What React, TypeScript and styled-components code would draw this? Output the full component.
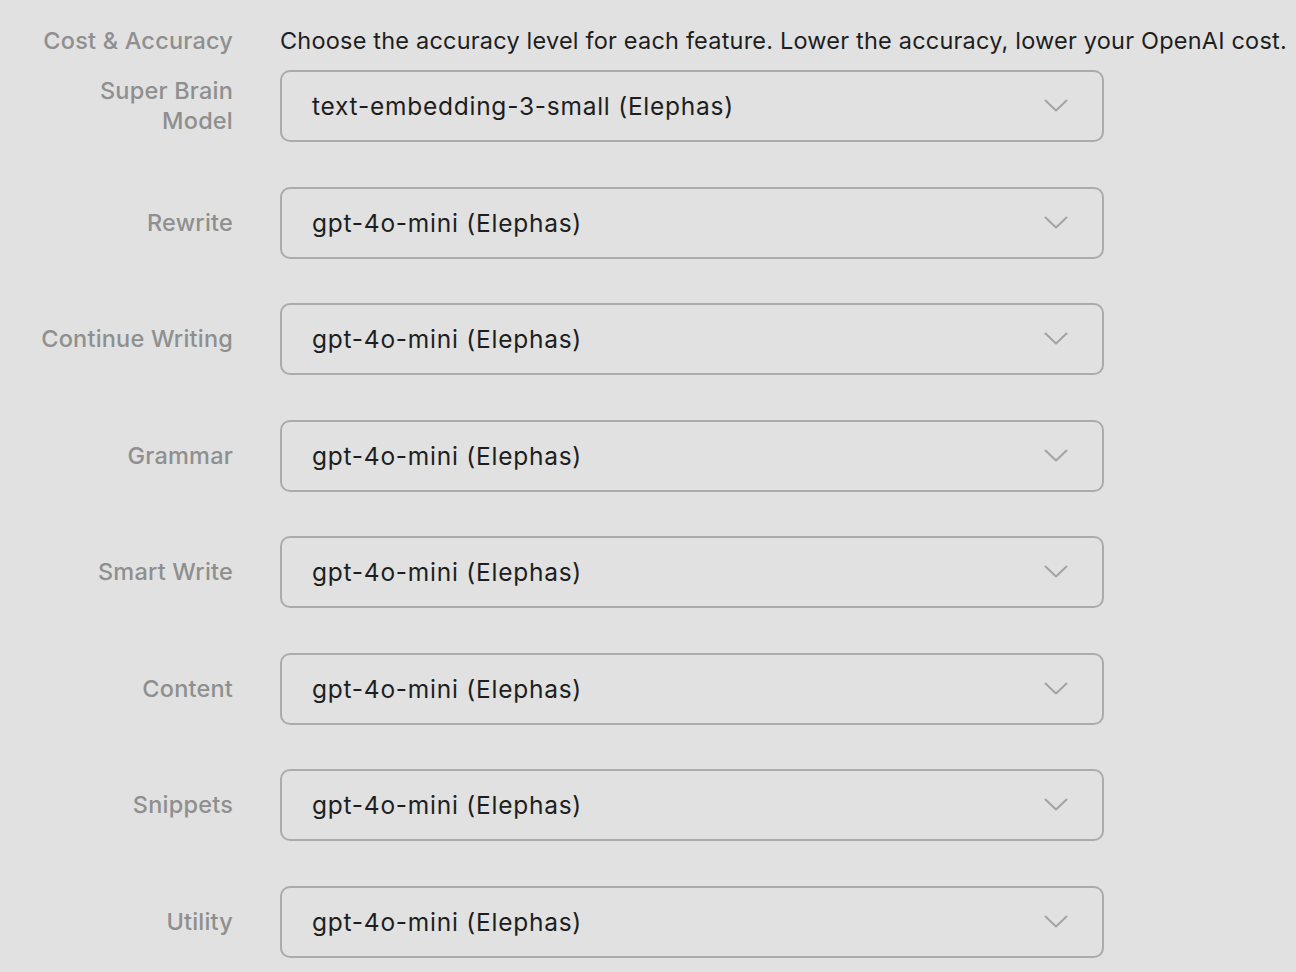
import styled, { createGlobalStyle } from "styled-components";

const GlobalStyle = createGlobalStyle`
  html, body {
    margin: 0;
    padding: 0;
    background: #e1e1e1;
  }
  body {
    font-family: Inter, "Noto Sans", sans-serif;
    -webkit-font-smoothing: antialiased;
  }
`;

const Page = styled.div`
  padding-top: 26px;
  min-height: 972px;
  box-sizing: border-box;
`;

const Row = styled.div`
  display: grid;
  grid-template-columns: 233px 824px;
  column-gap: 47px;
  align-items: center;
`;

const List = styled.div`
  display: flex;
  flex-direction: column;
  gap: 44.5px;
  margin-top: 14px;
`;

const Label = styled.div`
  box-sizing: border-box;
  padding-left: 36px;
  text-align: right;
  color: #8f8f8f;
  font-size: 23.5px;
  letter-spacing: 0.2px;
  font-weight: 500;
  line-height: 30px;
`;

const Intro = styled.div`
  color: #1e1e1e;
  font-size: 23.5px;
  letter-spacing: 0.2px;
  line-height: 30px;
  white-space: nowrap;
`;

const Select = styled.div`
  box-sizing: border-box;
  height: 72px;
  border: 2px solid #ababab;
  border-radius: 10px;
  display: flex;
  align-items: center;
  justify-content: space-between;
  padding: 0 34px 0 30px;
  color: #1e1e1e;
  font-size: 24.5px;
  letter-spacing: 0.75px;
`;

const Chevron = () => (
  <svg width="24" height="14" viewBox="0 0 24 14" fill="none">
    <path d="M1.5 1.5 L12 11.5 L22.5 1.5" stroke="#a3a3a3" strokeWidth="2" strokeLinecap="round" strokeLinejoin="round" />
  </svg>
);

const features = [
  { label: "Super Brain Model", value: "text-embedding-3-small (Elephas)" },
  { label: "Rewrite", value: "gpt-4o-mini (Elephas)" },
  { label: "Continue Writing", value: "gpt-4o-mini (Elephas)" },
  { label: "Grammar", value: "gpt-4o-mini (Elephas)" },
  { label: "Smart Write", value: "gpt-4o-mini (Elephas)" },
  { label: "Content", value: "gpt-4o-mini (Elephas)" },
  { label: "Snippets", value: "gpt-4o-mini (Elephas)" },
  { label: "Utility", value: "gpt-4o-mini (Elephas)" },
];

const App = () => {
  return (
    <Page>
      <GlobalStyle />
      <Row>
        <Label>Cost &amp; Accuracy</Label>
        <Intro>Choose the accuracy level for each feature. Lower the accuracy, lower your OpenAI cost.</Intro>
      </Row>
      <List>
        {features.map((f) => (
          <Row key={f.label}>
            <Label>{f.label}</Label>
            <Select>
              <span>{f.value}</span>
              <Chevron />
            </Select>
          </Row>
        ))}
      </List>
    </Page>
  );
};

export default App;
